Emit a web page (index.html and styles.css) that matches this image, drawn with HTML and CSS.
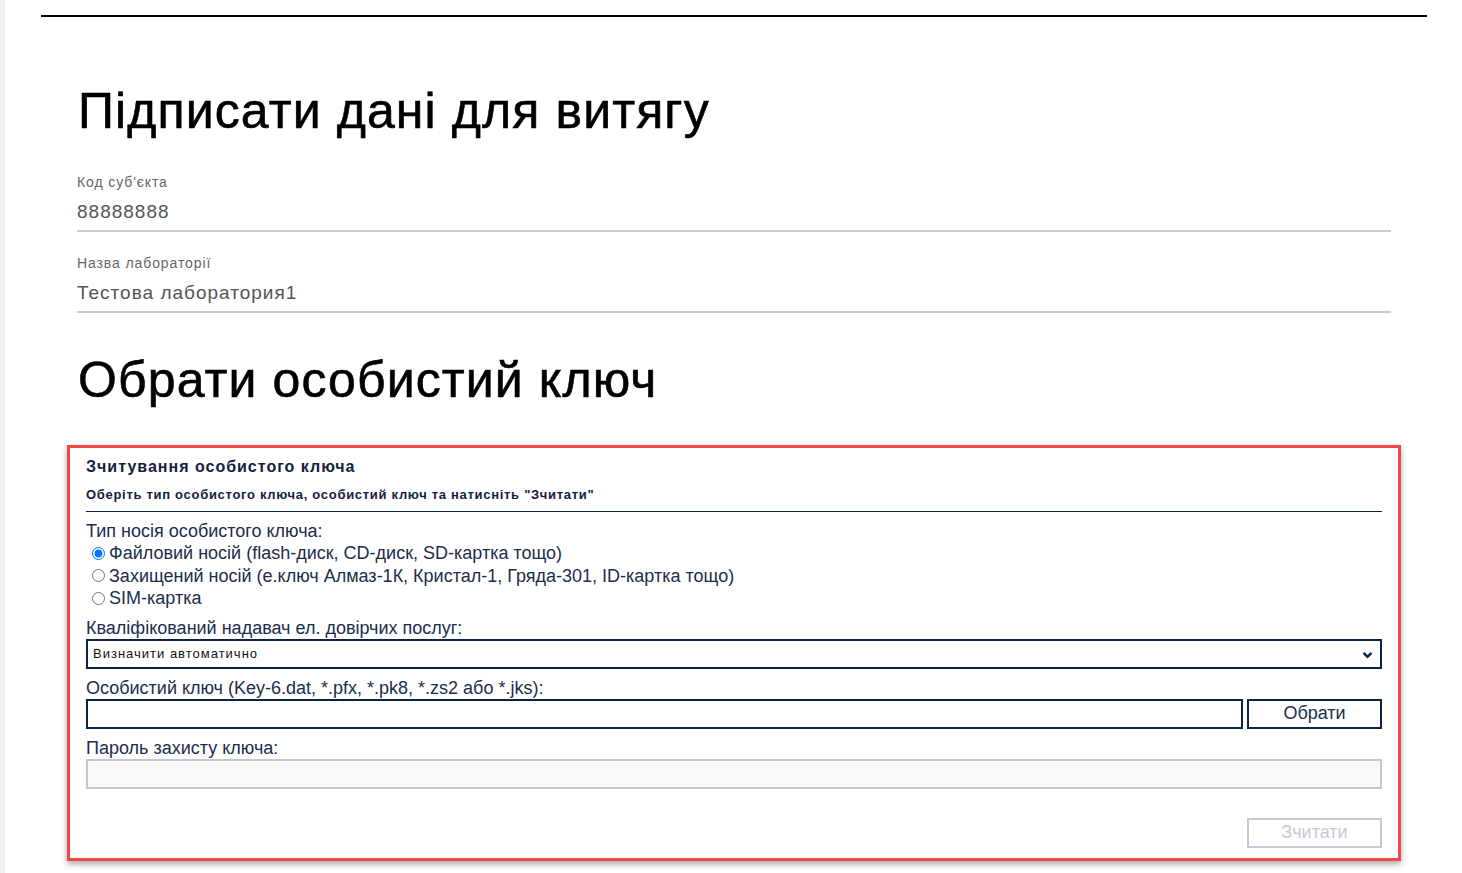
FILE: index.html
```html
<!DOCTYPE html>
<html lang="uk">
<head>
<meta charset="utf-8">
<title>Підписати дані для витягу</title>
<link rel="stylesheet" href="styles.css">
</head>
<body>
<div class="page">
  <div class="topline"></div>
  <main class="content">
    <h1 class="heading">Підписати дані для витягу</h1>
    <div class="field">
      <div class="field-label">Код суб'єкта</div>
      <div class="field-value">88888888</div>
    </div>
    <div class="field">
      <div class="field-label">Назва лабораторії</div>
      <div class="field-value">Тестова лаборатория1</div>
    </div>
    <h1 class="heading heading-second">Обрати особистий ключ</h1>

    <section class="keybox">
      <div class="kb-title">Зчитування особистого ключа</div>
      <div class="kb-subtitle">Оберіть тип особистого ключа, особистий ключ та натисніть "Зчитати"</div>
      <div class="kb-rule"></div>

      <div class="kb-label">Тип носія особистого ключа:</div>
      <label class="kb-radio"><input type="radio" name="kt" checked>Файловий носій (flash-диск, CD-диск, SD-картка тощо)</label>
      <label class="kb-radio"><input type="radio" name="kt">Захищений носій (е.ключ Алмаз-1К, Кристал-1, Гряда-301, ID-картка тощо)</label>
      <label class="kb-radio"><input type="radio" name="kt">SIM-картка</label>

      <div class="kb-label kb-label-gap">Кваліфікований надавач ел. довірчих послуг:</div>
      <div class="kb-select">
        <span class="kb-select-text">Визначити автоматично</span>
        <svg class="kb-chevron" width="11" height="8" viewBox="0 0 11 8"><path d="M1.5 1.8 L5.5 5.8 L9.5 1.8" fill="none" stroke="#0d2247" stroke-width="2.4"/></svg>
      </div>

      <div class="kb-label kb-label-gap2">Особистий ключ (Key-6.dat, *.pfx, *.pk8, *.zs2 або *.jks):</div>
      <div class="kb-filerow">
        <div class="kb-input"></div>
        <button class="kb-btn" type="button">Обрати</button>
      </div>

      <div class="kb-label kb-label-gap2">Пароль захисту ключа:</div>
      <div class="kb-input kb-input-disabled"></div>

      <div class="kb-actions">
        <button class="kb-btn kb-btn-disabled" type="button">Зчитати</button>
      </div>
    </section>
  </main>
</div>
</body>
</html>
```

FILE: styles.css
```css
html, body {
  margin: 0;
  padding: 0;
}
body {
  background: #f2f2f2;
  font-family: "Liberation Sans", Arial, sans-serif;
  color: #000;
}
.page {
  margin-left: 5px;
  background: #fff;
  min-height: 873px;
  padding-top: 15px;
  box-sizing: border-box;
  overflow: hidden;
}
.topline {
  height: 2px;
  background: #000;
  margin: 0 35px 0 36px;
}
.content {
  padding: 0 71px 0 72px;
}
.heading {
  font-size: 50px;
  font-weight: normal;
  line-height: 60px;
  letter-spacing: 1.1px;
  -webkit-text-stroke: 0.6px #000;
  margin: 64px 0 0 1px;
  color: #000;
}
.heading-second {
  margin-top: 37px;
}
.field {
  margin-top: 31px;
  border-bottom: 2px solid #cccccc;
  padding-bottom: 6px;
}
.field + .field {
  margin-top: 21px;
}
.field-label {
  font-size: 14px;
  line-height: 20px;
  letter-spacing: 0.9px;
  color: #666;
}
.field-value {
  margin-top: 8px;
  font-size: 19px;
  line-height: 24px;
  letter-spacing: 1px;
  color: #555;
}
.keybox {
  margin: 35px 0 0 -10px;
  width: 1334px;
  box-sizing: border-box;
  border: 3px solid #f44646;
  box-shadow: 0 3px 6px rgba(0,0,0,0.35);
  padding: 9px 16px 10px 16px;
  color: #1c2d4d;
}
.kb-title {
  font-size: 16px;
  line-height: 20px;
  font-weight: bold;
  letter-spacing: 1px;
  color: #14213d;
}
.kb-subtitle {
  margin-top: 10px;
  font-size: 13px;
  line-height: 16px;
  font-weight: bold;
  letter-spacing: 0.7px;
  color: #14213d;
}
.kb-rule {
  margin-top: 8px;
  height: 1px;
  background: #14213d;
}
.kb-label {
  margin-top: 8px;
  font-size: 18px;
  line-height: 22px;
  color: #1c2d4d;
}
.kb-label-gap {
  margin-top: 7px;
}
.kb-label-gap2 {
  margin-top: 8px;
}
.kb-radio {
  display: flex;
  align-items: center;
  font-size: 18px;
  line-height: 22.5px;
  color: #1c2d4d;
}
.kb-radio input {
  margin: 0 4px 0 6px;
  width: 13px;
  height: 13px;
}
.kb-select {
  position: relative;
  display: flex;
  align-items: center;
  height: 30px;
  box-sizing: border-box;
  border: 2px solid #0d2247;
  padding: 0 0 0 5px;
  font-size: 13px;
  letter-spacing: 1px;
  color: #111;
}
.kb-chevron {
  position: absolute;
  right: 7px;
  top: 10px;
}
.kb-filerow {
  display: flex;
  gap: 4px;
}
.kb-input {
  flex: 1;
  height: 30px;
  box-sizing: border-box;
  border: 2px solid #0d2247;
  background: #fff;
}
.kb-input-disabled {
  border-color: #c3c7d1;
  background: #f9f9f9;
}
.kb-btn {
  width: 135px;
  height: 30px;
  box-sizing: border-box;
  border: 2px solid #0d2247;
  background: #fff;
  font-family: "Liberation Sans", Arial, sans-serif;
  font-size: 18px;
  color: #1c2d4d;
  padding: 0;
}
.kb-actions {
  display: flex;
  justify-content: flex-end;
  margin-top: 29px;
}
.kb-btn-disabled {
  border-color: #c6cad3;
  color: #c6cad3;
}
```
